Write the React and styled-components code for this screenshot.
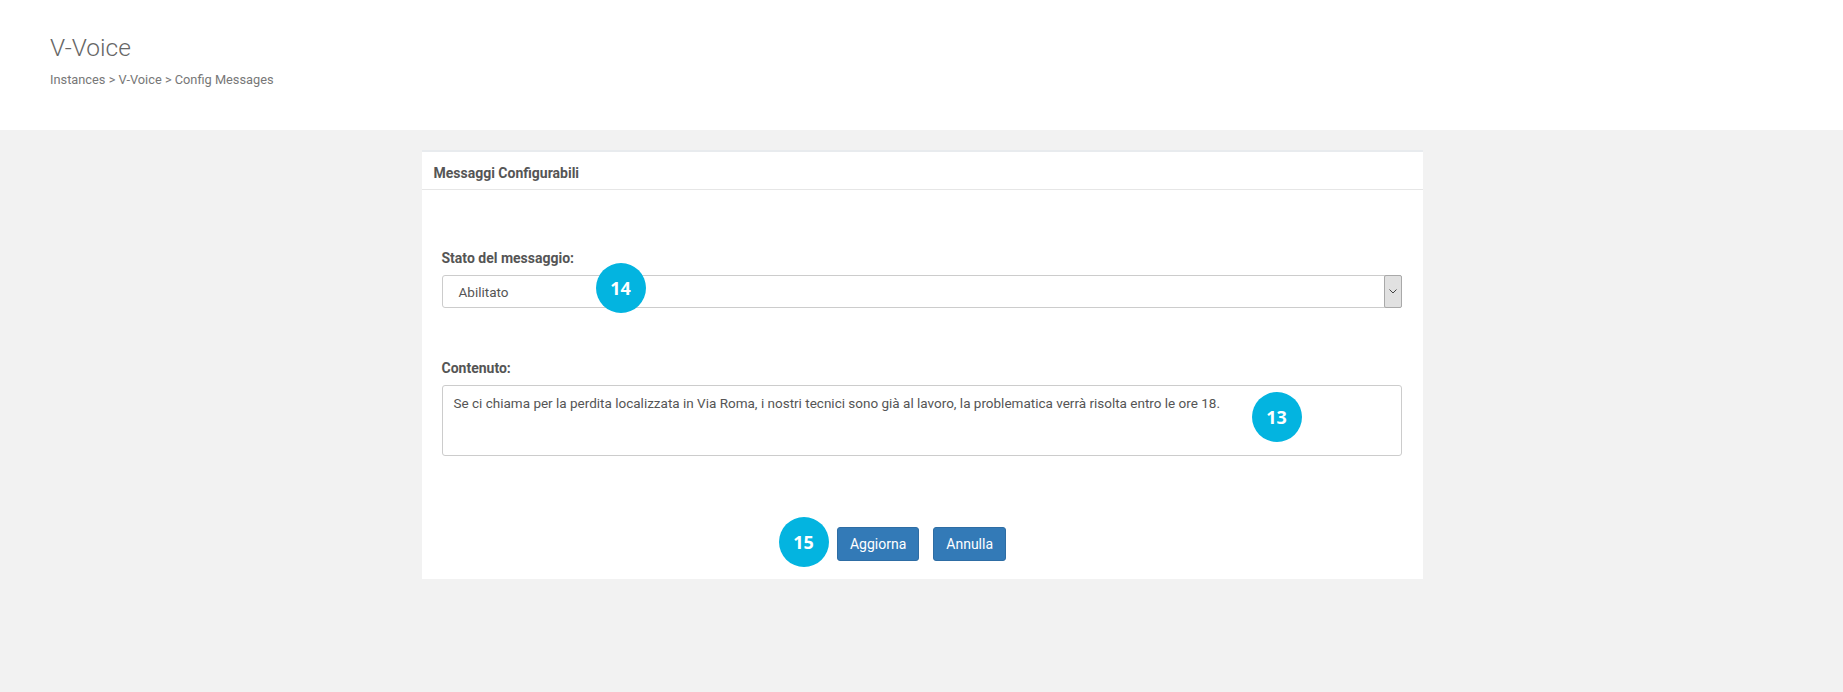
import React from 'react';
import styled, { createGlobalStyle } from 'styled-components';

const GlobalStyle = createGlobalStyle`
  html, body {
    margin: 0;
    padding: 0;
    background: #f2f2f2;
    font-family: Roboto, "Liberation Sans", Arial, sans-serif;
  }
  #root { min-height: 100vh; }
`;

const PageHeader = styled.header`
  height: 130px;
  box-sizing: border-box;
  padding: 33px 0 0 50px;
  background: #fff;
`;

const Title = styled.h1`
  margin: 0;
  font-size: 24.5px;
  line-height: 30px;
  font-weight: 300;
  color: #666;
`;

const Breadcrumb = styled.div`
  margin-top: 8px;
  font-size: 12.8px;
  line-height: 18px;
  color: #777;
`;

const Panel = styled.section`
  position: relative;
  width: 1001px;
  margin: 20px 0 0 calc(50% - 500px);
  background: #fff;
  border-top: 2px solid #e8ebee;
`;

const PanelHeading = styled.div`
  padding: 11px 12px 6px;
  border-bottom: 1px solid #e6e6e6;
  font-size: 14px;
  line-height: 20px;
  font-weight: 700;
  color: #555;
`;

const PanelBody = styled.div`
  padding: 58px 21px 18px 20px;
`;

const Field = styled.div`
  display: flex;
  flex-direction: column;
  gap: 7px;
  margin-bottom: ${({ $gap }) => $gap}px;
`;

const Label = styled.label`
  font-size: 14px;
  line-height: 20px;
  font-weight: 700;
  color: #555;
`;

const Select = styled.div`
  display: flex;
  align-items: center;
  height: 33px;
  box-sizing: border-box;
  border: 1px solid #ccc;
  border-radius: 3px;
  font-size: 13.5px;
  color: #555;
`;

const SelectValue = styled.span`
  flex: 1;
  padding-left: 16px;
  padding-top: 1px;
`;

const SelectArrow = styled.span`
  display: flex;
  align-items: center;
  justify-content: center;
  align-self: stretch;
  width: 16px;
  margin: -1px -1px -1px 0;
  background: #e1e1e1;
  border: 1px solid #a9a9a9;
  border-radius: 2px;
`;

const TextArea = styled.div`
  height: 71px;
  box-sizing: border-box;
  padding: 7px 11px;
  border: 1px solid #ccc;
  border-radius: 3px;
  font-size: 13.5px;
  line-height: 20px;
  color: #555;
`;

const Actions = styled.div`
  display: flex;
  justify-content: center;
  gap: 14px;
`;

const Button = styled.button`
  height: 34px;
  padding: 0 12px;
  border: 1px solid #2e6da4;
  border-radius: 3px;
  background: #337ab7;
  color: #fff;
  font-family: inherit;
  font-size: 14px;
`;

const Badge = styled.span`
  position: absolute;
  left: ${({ $x }) => $x}px;
  top: ${({ $y }) => $y}px;
  width: 50px;
  height: 50px;
  border-radius: 50%;
  background: #03b4e0;
  color: #fff;
  display: flex;
  align-items: center;
  justify-content: center;
  font-family: "Open Sans", sans-serif;
  font-weight: 700;
  font-size: 18px;
`;

export default function App() {
  return (
    <>
      <GlobalStyle />
      <PageHeader>
        <Title>V-Voice</Title>
        <Breadcrumb>Instances &gt; V-Voice &gt; Config Messages</Breadcrumb>
      </PageHeader>
      <Panel>
        <PanelHeading>Messaggi Configurabili</PanelHeading>
        <PanelBody>
          <Field $gap={50}>
            <Label>Stato del messaggio:</Label>
            <Select>
              <SelectValue>Abilitato</SelectValue>
              <SelectArrow>
                <svg width="8" height="5" viewBox="0 0 8 5">
                  <path d="M0.5 0.5 L4 4 L7.5 0.5" fill="none" stroke="#444" strokeWidth="1" />
                </svg>
              </SelectArrow>
            </Select>
          </Field>
          <Field $gap={71}>
            <Label>Contenuto:</Label>
            <TextArea>
              Se ci chiama per la perdita localizzata in Via Roma, i nostri tecnici sono già al lavoro, la problematica verrà risolta entro le ore 18.
            </TextArea>
          </Field>
          <Actions>
            <Button>Aggiorna</Button>
            <Button>Annulla</Button>
          </Actions>
        </PanelBody>
        <Badge $x={174} $y={111}>14</Badge>
        <Badge $x={830} $y={240}>13</Badge>
        <Badge $x={357} $y={365}>15</Badge>
      </Panel>
    </>
  );
}
